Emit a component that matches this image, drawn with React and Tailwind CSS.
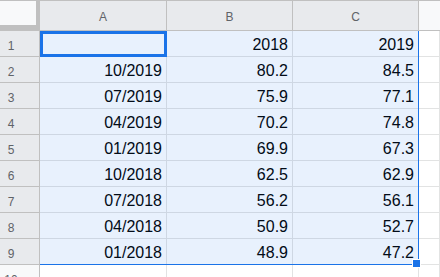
import React from 'react';

const rows = [
  ['', '2018', '2019'],
  ['10/2019', '80.2', '84.5'],
  ['07/2019', '75.9', '77.1'],
  ['04/2019', '70.2', '74.8'],
  ['01/2019', '69.9', '67.3'],
  ['10/2018', '62.5', '62.9'],
  ['07/2018', '56.2', '56.1'],
  ['04/2018', '50.9', '52.7'],
  ['01/2018', '48.9', '47.2'],
];

const cols = 'grid grid-cols-[40px_127px_126px_126px_1fr]';

function RowHeader({ n, selected }) {
  return (
    <div
      className={`flex items-end justify-center pr-[17px] pb-[3px] border-r border-b border-[#c0c0c0] text-[12px] leading-[14px] text-[#5f6368] ${
        selected ? 'bg-[#e8eaed]' : 'bg-[#f8f9fa]'
      }`}
    >
      {n}
    </div>
  );
}

function Cell({ children }) {
  return (
    <div className="flex items-end justify-end pr-[4px] pb-[2px] border-r border-b border-[#e2e3e3] text-[16px] leading-[18px] text-black bg-white">
      {children}
    </div>
  );
}

export default function App() {
  return (
    <div
      className="relative w-[440px] h-[277px] overflow-hidden bg-white"
      style={{ fontFamily: '"Liberation Sans", Arial, sans-serif' }}
    >
      {/* column headers */}
      <div className={`${cols} h-[31px] border-t border-[#c0c0c0]`}>
        <div className="relative bg-[#f8f9fa] border-b border-[#c0c0c0]">
          <div className="absolute right-0 top-[-1px] w-[4px] h-[31px] bg-[#c0c0c0]" />
          <div className="absolute left-0 bottom-0 w-[40px] h-[5px] bg-[#c0c0c0]" />
        </div>
        {['A', 'B', 'C'].map((c) => (
          <div
            key={c}
            className="flex items-center justify-center pt-[2px] bg-[#e8eaed] border-r border-b border-[#c0c0c0] text-[12px] leading-[14px] text-[#5f6368]"
          >
            {c}
          </div>
        ))}
        <div className="bg-[#f8f9fa] border-b border-[#c0c0c0]" />
      </div>

      {/* rows */}
      {rows.map((r, i) => (
        <div key={i} className={`${cols} h-[26px]`}>
          <RowHeader n={i + 1} selected />
          {r.map((v, j) => (
            <Cell key={j}>{v}</Cell>
          ))}
          <Cell />
        </div>
      ))}
      <div className={`${cols} h-[26px]`}>
        <RowHeader n={10} />
        <Cell />
        <Cell />
        <Cell />
        <Cell />
      </div>

      {/* selection A1:C9 */}
      <div className="absolute left-[40px] top-[31px] w-[379px] h-[234px] bg-[#1a73e8]/10 border-r border-b border-[#1a73e8]" />
      {/* active cell */}
      <div className="absolute left-[40px] top-[31px] w-[127px] h-[26px] border-[3px] border-[#1a73e8]" />
      {/* fill handle */}
      <div className="absolute left-[412px] top-[259px] w-[9px] h-[9px] bg-[#1a73e8] border border-white" />
    </div>
  );
}
